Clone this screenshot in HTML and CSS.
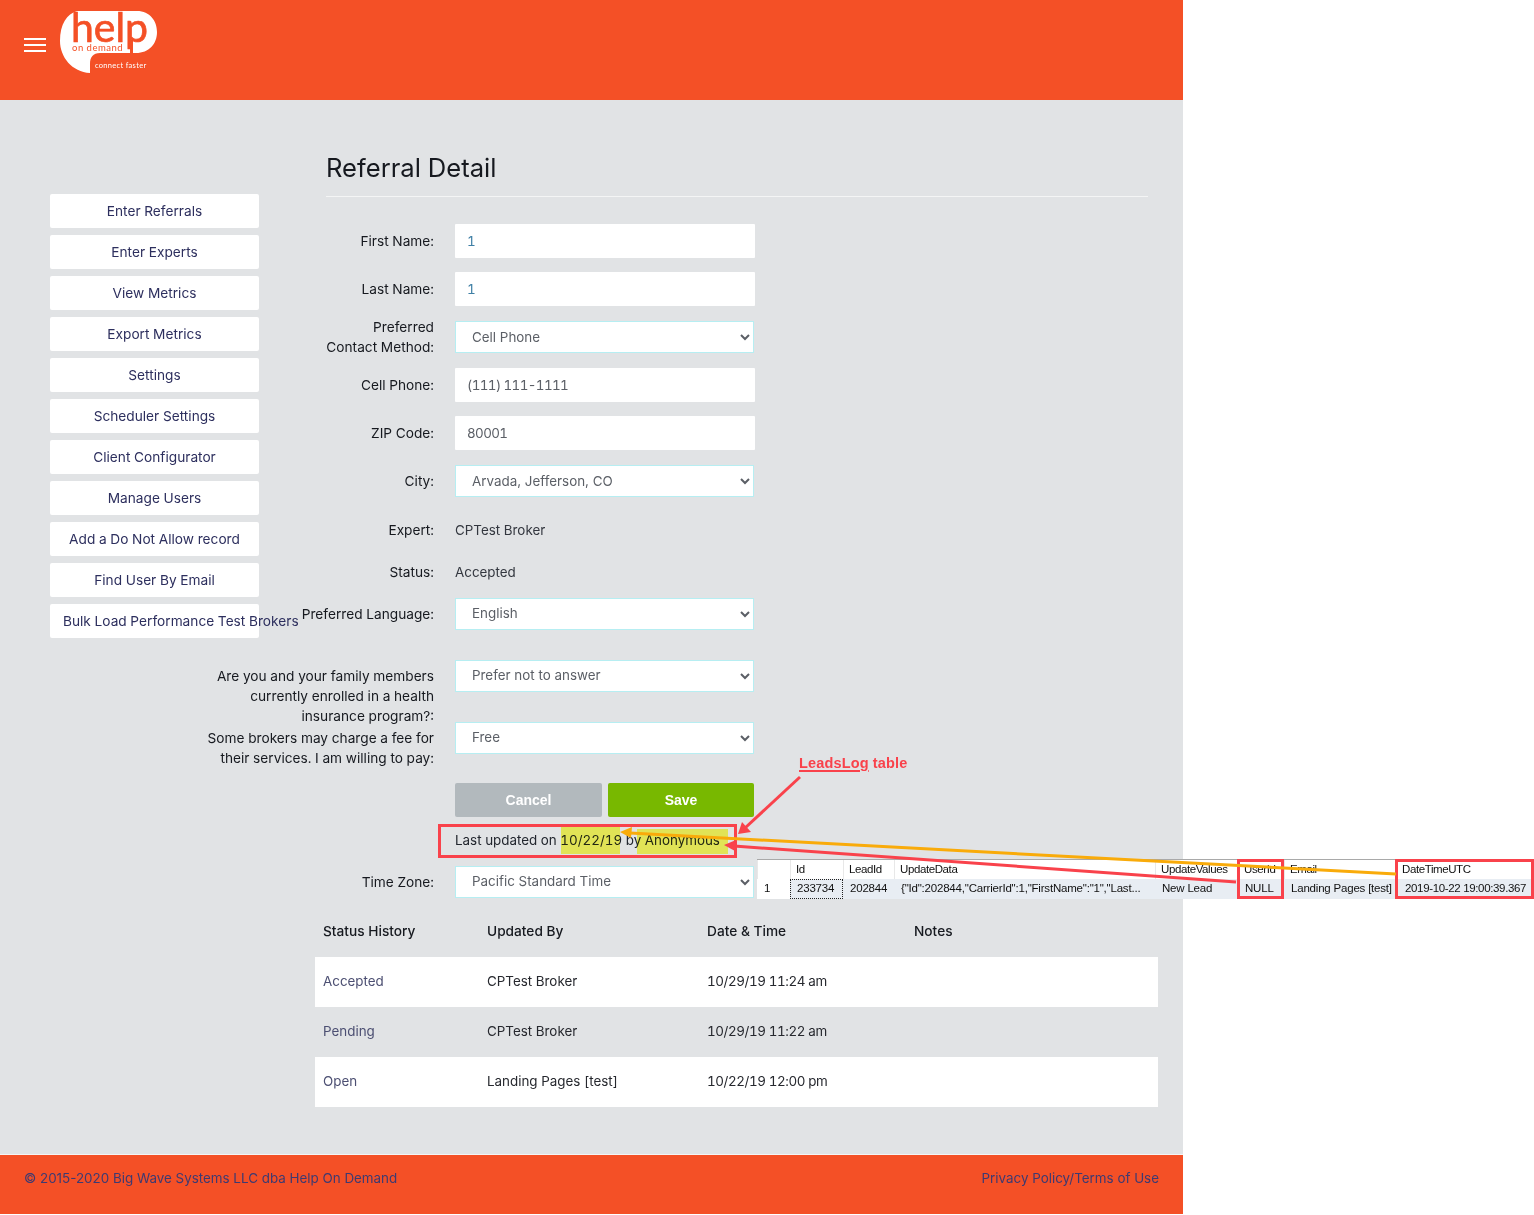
FILE: index.html
```html
<!DOCTYPE html>
<html>
<head lang="en">
    <meta charset="UTF-8">
    <title>Referral Detail</title>
    <link rel="stylesheet" href="styles.css">
</head>
<body>
<div id="page">
    <div id="header">
        <div id="burger"><span></span><span></span><span></span></div>
        <svg id="logo" width="100" height="78" viewBox="0 0 100 78">
            <g transform="translate(0 10)">
                <path fill="#fff" d="M17 1H77C90 1 97 11 97 22C97 34 89 43 76 43H40C33 43 30 47 30 54V63C12 62 0 47 0 31C0 14 7 4 17 1Z"/>
                <rect fill="#f45026" x="70" y="30" width="3" height="13"/>
                <text class="logo-help" x="11" y="32" textLength="77" lengthAdjust="spacingAndGlyphs">help</text>
                <text class="logo-demand" x="12" y="41">on demand</text>
                <text class="logo-faster" x="35" y="58">connect faster</text>
            </g>
        </svg>
    </div>
    <div id="main">
        <div id="nav">
            <a>Enter Referrals</a>
            <a>Enter Experts</a>
            <a>View Metrics</a>
            <a>Export Metrics</a>
            <a>Settings</a>
            <a>Scheduler Settings</a>
            <a>Client Configurator</a>
            <a>Manage Users</a>
            <a>Add a Do Not Allow record</a>
            <a>Find User By Email</a>
            <a>Bulk Load Performance Test Brokers</a>
        </div>
        <div id="content">
            <h1>Referral Detail</h1>
            <div class="row">
                <label>First Name:</label>
                <input class="blue" type="text" value="1">
            </div>
            <div class="row">
                <label>Last Name:</label>
                <input class="blue" type="text" value="1">
            </div>
            <div class="row row-tall">
                <label>Preferred<br>Contact Method:</label>
                <select><option>Cell Phone</option></select>
            </div>
            <div class="row">
                <label>Cell Phone:</label>
                <input type="text" value="(111) 111-1111">
            </div>
            <div class="row">
                <label>ZIP Code:</label>
                <input type="text" value="80001">
            </div>
            <div class="row row-tall">
                <label>City:</label>
                <select><option>Arvada, Jefferson, CO</option></select>
            </div>
            <div class="row row-text">
                <label>Expert:</label>
                <span class="value">CPTest Broker</span>
            </div>
            <div class="row row-text">
                <label>Status:</label>
                <span class="value">Accepted</span>
            </div>
            <div class="row row-lang">
                <label>Preferred Language:</label>
                <select><option>English</option></select>
            </div>
            <div class="row row-long">
                <label>Are you and your family members<br>currently enrolled in a health<br>insurance program?:</label>
                <select><option>Prefer not to answer</option></select>
            </div>
            <div class="row row-long row-fee">
                <label>Some brokers may charge a fee for<br>their services. I am willing to pay:</label>
                <select><option>Free</option></select>
            </div>
            <div class="row row-buttons">
                <label></label>
                <button class="cancel">Cancel</button>
                <button class="save">Save</button>
            </div>
            <div class="row row-updated">
                <label></label>
                <span class="updated">Last updated on 10/22/19 by Anonymous</span>
            </div>
            <div class="row row-zone">
                <label>Time Zone:</label>
                <select><option>Pacific Standard Time</option></select>
            </div>
            <table id="history">
                <tr><th>Status History</th><th>Updated By</th><th>Date &amp; Time</th><th>Notes</th></tr>
                <tr><td class="muted">Accepted</td><td>CPTest Broker</td><td class="date">10/29/19 11:24 am</td><td></td></tr>
                <tr><td class="muted">Pending</td><td>CPTest Broker</td><td class="date">10/29/19 11:22 am</td><td></td></tr>
                <tr><td class="muted">Open</td><td>Landing Pages [test]</td><td class="date">10/22/19 12:00 pm</td><td></td></tr>
            </table>
        </div>
    </div>
    <div id="footer">
        <span>&copy; 2015-2020 Big Wave Systems LLC dba Help On Demand</span>
        <span>Privacy Policy/Terms of Use</span>
    </div>
</div>

<!-- markup drawn over the screenshot -->
<div id="sql">
    <div class="sql-head"></div><div class="sql-head">Id</div><div class="sql-head">LeadId</div><div class="sql-head">UpdateData</div><div class="sql-head">UpdateValues</div><div class="sql-head">UserId</div><div class="sql-head">Email</div><div class="sql-head">DateTimeUTC</div>
    <div class="sql-num">1</div><div class="sql-cell sql-active">233734</div><div class="sql-cell">202844</div><div class="sql-cell">{"Id":202844,"CarrierId":1,"FirstName":"1","Last...</div><div class="sql-cell">New Lead</div><div class="sql-cell">NULL</div><div class="sql-cell">Landing Pages [test]</div><div class="sql-cell sql-last">2019-10-22 19:00:39.367</div>
</div>
<div class="mark" id="mark-date"></div>
<div class="mark" id="mark-name"></div>
<div class="box" id="box-updated"></div>
<div class="box" id="box-user"></div>
<div class="box" id="box-time"></div>
<div id="note"><u>LeadsLog</u> table</div>
<svg id="arrows" width="1534" height="1215" viewBox="0 0 1534 1215">
    <g fill="none" stroke-width="3">
        <path stroke="#f9ab0a" d="M1396 874L630 833"/>
        <path stroke="#f9424b" d="M1236 882L734 846"/>
        <path stroke="#f9424b" d="M800 777L745 828"/>
    </g>
    <path fill="#f9ab0a" d="M620 832L632 827L631 838Z"/>
    <path fill="#f9424b" d="M724 845L736 840L735 851Z"/>
    <path fill="#f9424b" d="M738 834L742 822L751 832Z"/>
</svg>
</body>
</html>
```

FILE: styles.css
```css
*{
    margin: 0;
    padding: 0;
    box-sizing: border-box;
}
body{
    position: relative;
    height: 1215px;
    background: #fff;
    font-family: "Inter", "Liberation Sans", sans-serif;
    font-size: 13.7px;
    font-variant-numeric: tabular-nums;
    color: #16191f;
    overflow: hidden;
}
#page{
    display: flex;
    flex-direction: column;
    width: 1183px;
    height: 1214px;
    background: #e1e3e5;
}
#header{
    display: flex;
    align-items: flex-start;
    height: 100px;
    padding-left: 24px;
    background: #f45026;
}
#burger{
    display: flex;
    flex-direction: column;
    gap: 4px;
    width: 22px;
    margin: 38px 14px 0 0;
}
#burger span{
    height: 2px;
    background: #fff;
}
.logo-help{
    font-family: "Lato", sans-serif;
    font-size: 41px;
    stroke: #f45026;
    stroke-width: 0.7px;
    fill: #f45026;
}
.logo-demand{
    font-family: "Lato", sans-serif;
    font-size: 9.5px;
    letter-spacing: 0.5px;
    fill: #f45026;
}
.logo-faster{
    font-family: "Lato", sans-serif;
    font-size: 7.5px;
    letter-spacing: 0.3px;
    fill: #fff;
}
#main{
    display: flex;
    flex: 1;
}
#nav{
    display: flex;
    flex-direction: column;
    gap: 7px;
    width: 209px;
    margin: 94px 0 0 50px;
}
#nav a{
    display: block;
    height: 34px;
    padding: 0 13px;
    border-radius: 2px;
    background: #fff;
    line-height: 34px;
    text-align: center;
    white-space: nowrap;
    color: #2d2f5e;
}
#content{
    width: 843px;
    margin: 50px 0 0 56px;
}
h1{
    height: 47px;
    margin: 0 10px 27px 11px;
    border-bottom: 1px solid #f4f5f5;
    font-size: 25.6px;
    font-weight: 400;
    line-height: 36px;
    color: #16191f;
}
.row{
    display: flex;
    align-items: center;
    height: 34px;
    margin-bottom: 14px;
}
.row label{
    display: flex;
    justify-content: flex-end;
    flex: none;
    width: 119px;
    margin-right: 21px;
    line-height: 20px;
    text-align: right;
    white-space: nowrap;
    color: #16191f;
}
.row input{
    width: 300px;
    height: 34px;
    padding: 0 12px;
    border: 0;
    border-radius: 1px;
    background: #fff;
    font: 13.4px "Inter", "Liberation Sans", sans-serif;
    font-variant-numeric: tabular-nums;
    letter-spacing: -0.6px;
    color: #5b5f66;
}
.row input.blue{
    color: #3f7fa5;
}
.row select{
    width: 299px;
    height: 32px;
    padding: 0 0 2px 12px;
    border: 1px solid #b6eef2;
    border-radius: 0;
    background: #fff;
    font: 13.4px "Inter", "Liberation Sans", sans-serif;
    color: #5b5f66;
}
.row-tall select{
    padding-bottom: 1px;
}
.value{
    padding-bottom: 1px;
    font-size: 13.4px;
    color: #33373f;
}
.row-text{
    height: 36px;
    margin-bottom: 6px;
}
.row-lang{
    height: 32px;
    margin-top: 8px;
    margin-bottom: 30px;
}
.row-long{
    align-items: flex-start;
    height: 62px;
    margin-bottom: 0;
}
.row-long label{
    padding-top: 6px;
}
.row-fee{
    height: 61px;
}
.row-buttons{
    margin-bottom: 7px;
}
.row-buttons button{
    width: 147px;
    height: 34px;
    border: 0;
    border-radius: 2px;
    font: 700 14px "Liberation Sans", sans-serif;
    color: #fff;
}
.cancel{
    margin-right: 6px;
    background: #b2b9bd;
}
.row-buttons .save{
    width: 146px;
    background: #78b800;
}
.row-updated{
    height: 32px;
    margin-bottom: 10px;
}
.updated{
    padding-bottom: 1px;
    font-size: 13.4px;
    color: #22262e;
}
.row-zone{
    height: 32px;
    margin-bottom: 9px;
}
#history{
    width: 843px;
    border-collapse: collapse;
    table-layout: fixed;
}
#history th, #history td{
    height: 50px;
    padding: 0 0 2px 8px;
    text-align: left;
    font-size: 13.4px;
    font-weight: 400;
    color: #26282e;
}
#history th{
    font-size: 13.7px;
    font-weight: 500;
    color: #16191f;
}
#history th:nth-child(1){ width: 164px; }
#history th:nth-child(2){ width: 220px; }
#history th:nth-child(3){ width: 207px; }
#history tr:nth-child(even){
    background: #fff;
}
#history td.muted{
    color: #4c4f72;
}
#history td.date{
    letter-spacing: -0.4px;
}
#footer{
    display: flex;
    justify-content: space-between;
    height: 60px;
    padding: 15px 24px 0;
    border-top: 1px solid #f4f5f5;
    background: #f45026;
    font-size: 13.4px;
    font-variant-numeric: normal;
    color: #3d3a72;
}

/* annotation layer */
#sql{
    position: absolute;
    left: 757px;
    top: 859px;
    display: grid;
    grid-template-columns: 33px 53px 51px 261px 83px 46px 112px 137px;
    grid-template-rows: 19px 20px;
    width: 776px;
    border-top: 1px solid #a9a9a9;
    font-family: "Liberation Sans", sans-serif;
    font-size: 11.5px;
    line-height: 18px;
    color: #111;
}
.sql-head{
    padding-left: 5px;
    border-left: 1px solid #e8e8e8;
    background: #fff;
    letter-spacing: -0.4px;
}
.sql-num{
    padding-left: 7px;
    background: #fff;
    line-height: 19px;
}
.sql-cell{
    padding-left: 7px;
    background: #e8edf3;
    line-height: 19px;
    white-space: nowrap;
    overflow: hidden;
    letter-spacing: -0.2px;
}
.sql-last{
    padding-left: 9px;
    letter-spacing: -0.35px;
}
.sql-active{
    outline: 1px dotted #222;
    outline-offset: -1px;
}
.mark{
    position: absolute;
    background: #ffff60;
    mix-blend-mode: multiply;
}
#mark-date{
    left: 561px;
    top: 827px;
    width: 59px;
    height: 27px;
}
#mark-name{
    left: 637px;
    top: 829px;
    width: 91px;
    height: 25px;
}
.box{
    position: absolute;
    border: 3px solid #f9424b;
}
#box-updated{
    left: 438px;
    top: 824px;
    width: 299px;
    height: 34px;
}
#box-user{
    left: 1237px;
    top: 859px;
    width: 47px;
    height: 40px;
}
#box-time{
    left: 1395px;
    top: 859px;
    width: 139px;
    height: 40px;
}
#note{
    position: absolute;
    left: 799px;
    top: 755px;
    font-family: "Liberation Sans", sans-serif;
    font-size: 14.5px;
    font-weight: bold;
    letter-spacing: 0.15px;
    color: #f9424b;
}
#note u{
    text-decoration-thickness: 2px;
    text-underline-offset: 2px;
}
#arrows{
    position: absolute;
    left: 0;
    top: 0;
}
```
